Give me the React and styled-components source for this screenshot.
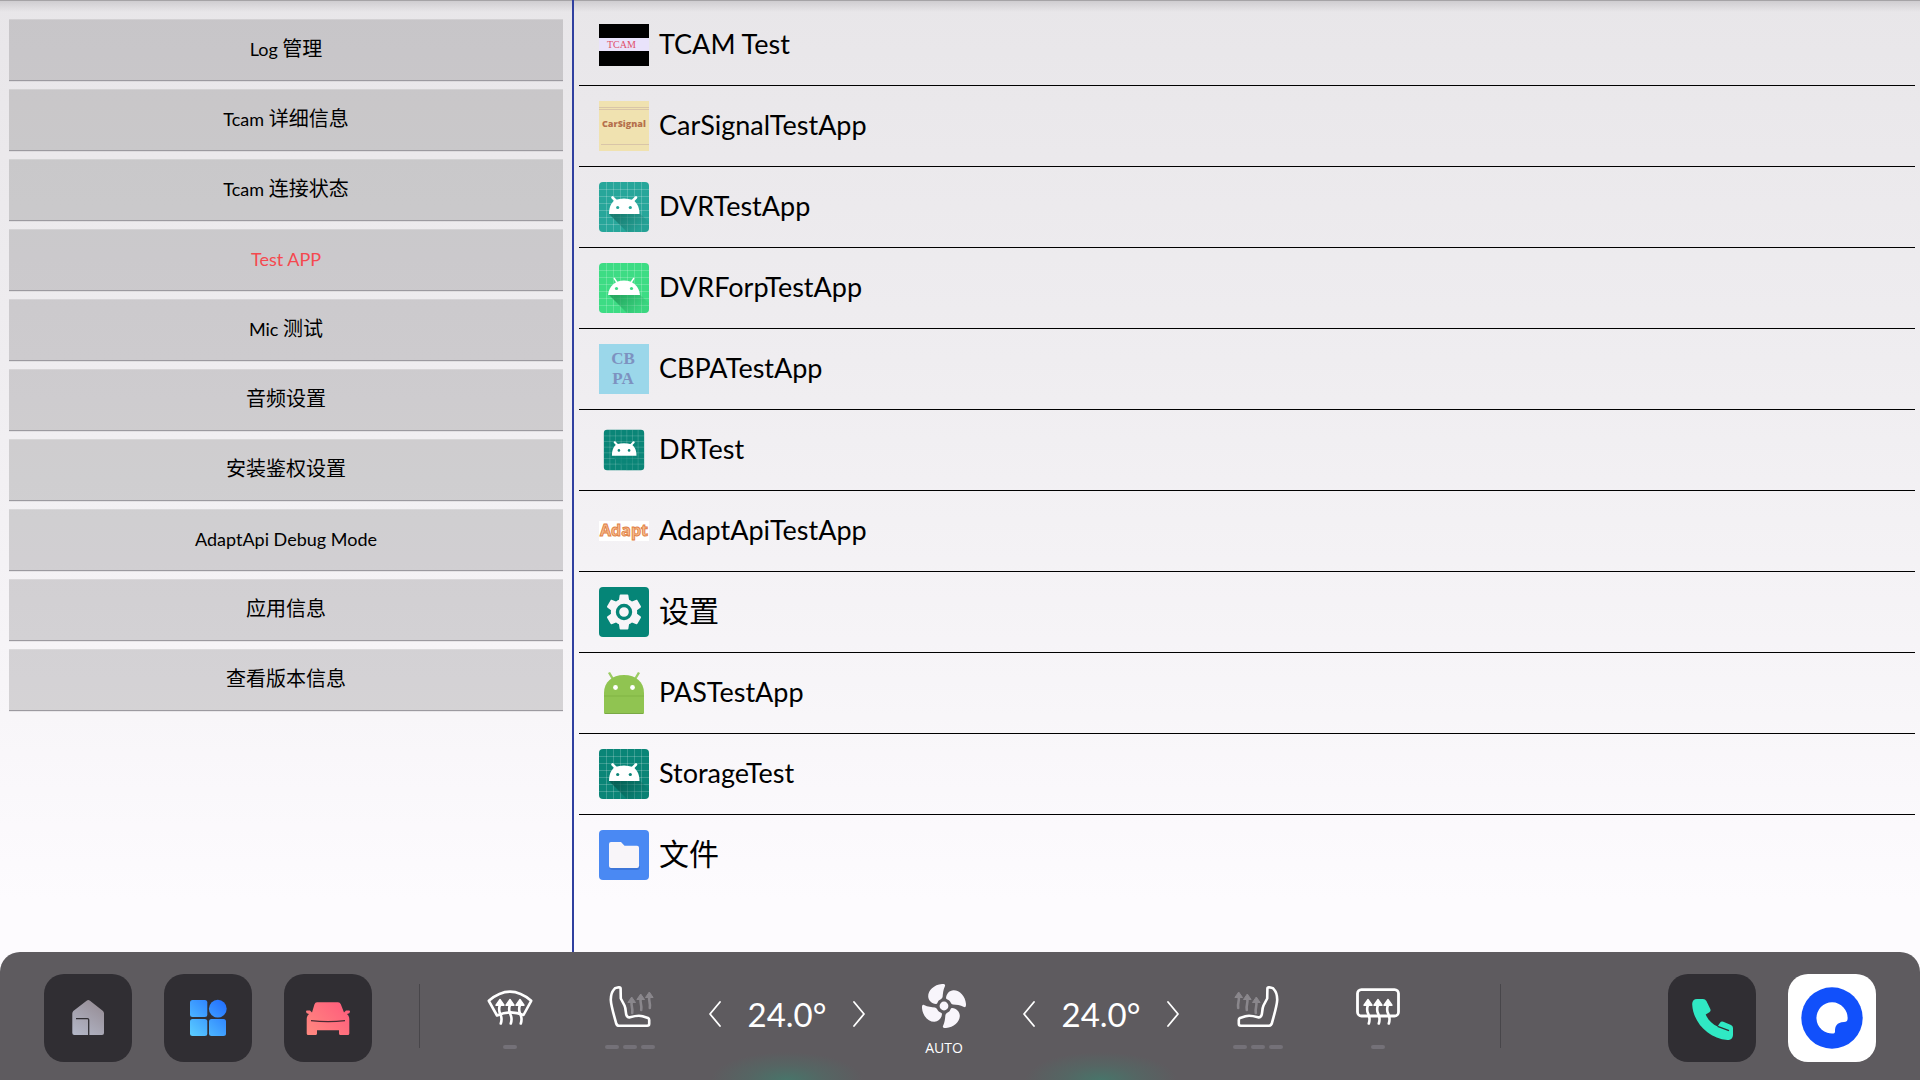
import React, { useState } from 'react';
import styled, { createGlobalStyle } from 'styled-components';

const GlobalStyle = createGlobalStyle`
  * {
    box-sizing: border-box;
  }

  body {
    margin: 0;
    font-family: Lato, "Noto Sans CJK SC", sans-serif;
    color: #000;
  }

  button {
    border: none;
    padding: 0;
    background: none;
    color: inherit;
    font: inherit;
    cursor: pointer;
  }

  ul {
    list-style: none;
    margin: 0;
    padding: 0;
  }

  svg {
    display: block;
    flex-shrink: 0;
  }
`;

const Page = styled.div`
  min-height: 100vh;
  display: flex;
  flex-direction: column;
  background:
    linear-gradient(#a5a3a6 0, #a5a3a6 1px, rgba(190, 188, 192, 0.6) 1px, rgba(220, 218, 222, 0) 12px),
    linear-gradient(#e8e6e9 0, #efedf0 360px, #f7f5f8 680px, #fdfbfe 900px);
`;

const Content = styled.main`
  flex: 1;
  display: flex;
`;

const Sidebar = styled.nav`
  flex: 0 0 574px;
  padding: 19px 9px;
  border-right: 2px solid #3040a0;

  ul {
    display: grid;
    gap: 8px;
  }
`;

const MenuButton = styled.button`
  width: 100%;
  height: 62px;
  padding-bottom: 4px;
  background-color: rgba(0, 0, 0, 0.14);
  box-shadow: inset 0 -1px #9c9aa0, inset 0 1px rgba(255, 255, 255, 0.2), 0 1px rgba(0, 0, 0, 0.06);
  font-size: 20px;
  line-height: 28px;
  color: ${props => (props.$active ? '#f5484f' : '#000')};

  span {
    font-size: 18px;
  }
`;

const AppList = styled.ul`
  flex: 1;
  && {
    padding: 5px 5px 0;
  }

  li + li {
    border-top: 1px solid #000;
  }
`;

const AppRow = styled.button`
  width: 100%;
  height: 80px;
  padding: 0 20px;
  display: flex;
  align-items: center;
  gap: 10px;
  text-align: left;
`;

const AppName = styled.span`
  padding-bottom: ${props => (props.$cjk ? 4 : 2)}px;
  font-size: ${props => (props.$cjk ? 30 : 27)}px;
  line-height: 40px;
`;

const Dock = styled.footer`
  height: 128px;
  padding: 0 44px;
  display: flex;
  align-items: center;
  border-radius: 20px 20px 0 0;
  background-color: #5e5b5f;
  color: #fff;
`;

const DockGroup = styled.div`
  display: flex;
  gap: 32px;
`;

const Tile = styled.button`
  width: 88px;
  height: 88px;
  margin-top: 4px;
  display: grid;
  place-items: center;
  border-radius: 20px;
  background-color: ${props => (props.$light ? '#fff' : '#302e33')};
`;

const Divider = styled.div`
  width: 1px;
  height: 64px;
  margin: 0 ${props => props.$after || 0}px 0 ${props => props.$before || 0}px;
  background-color: #48464a;
`;

const Climate = styled.div`
  flex: 1;
  align-self: stretch;
  padding-right: 32px;
  display: flex;
  justify-content: center;
  gap: 27px;
`;

const ClimateButton = styled.button`
  width: 88px;
  height: 128px;
  padding-top: 30px;
  display: flex;
  flex-direction: column;
  align-items: center;
`;

const Levels = styled.div`
  margin-top: 15px;
  display: flex;
  gap: 4px;

  i {
    width: 14px;
    height: 4px;
    border-radius: 2px;
    background-color: #747178;
  }
`;

const FanLabel = styled.span`
  margin-top: 8px;
  font-family: "Open Sans", sans-serif;
  font-size: 14px;
  line-height: 20px;
`;

const Temperature = styled.div`
  width: 172px;
  height: 128px;
  padding-bottom: 4px;
  display: flex;
  align-items: center;
  justify-content: space-between;
  background: radial-gradient(ellipse 76px 28px at 50% 100%, #48756a, rgba(72, 117, 106, 0.4) 50%, rgba(94, 91, 95, 0));

  output {
    font-size: 33px;
    line-height: 40px;
  }
`;

const Step = styled.button`
  width: 28px;
  height: 48px;
  display: grid;
  place-items: center;
`;

function AndroidIcon({ id, color, shade, thin, inset }) {
  const lines = [7, 14, 21, 28, 35, 42];
  return (
    <svg width="50" height="50" viewBox={inset ? '-6 -6 62 62' : '0 0 50 50'}>
      <defs>
        <linearGradient id={id} gradientUnits="userSpaceOnUse" x1="20" y1="32" x2="38" y2="50">
          <stop offset="0" stopColor={shade} stopOpacity="0.8" />
          <stop offset="1" stopColor={shade} stopOpacity="0.1" />
        </linearGradient>
      </defs>
      <rect width="50" height="50" rx="4" fill={color} />
      <g stroke="#fff" strokeOpacity="0.2" strokeWidth="1">
        {lines.map(n => (
          <path key={n} d={`M${n + 0.5} 0V50M0 ${n + 0.5}H50`} />
        ))}
      </g>
      <path d="M10 32L28 50H46Q50 50 50 46V40L40 31Z" fill={`url(#${id})`} />
      {thin ? (
        <g>
          <path d="M15 15L19 21M35 15L31 21" stroke="#fff" strokeWidth="1.4" />
          <path d="M9 32C10 23 16 17.500 25 17.500S40 23 41 32Z" fill="#fff" />
        </g>
      ) : (
        <g>
          <path d="M13.500 15.500L18 20M37 15.500L32.500 20" stroke="#fff" strokeWidth="2.6" strokeLinecap="round" />
          <path d="M10 32C10 24 13 20 16 18Q25 15 34 18C37 20 40.500 24 40.500 32Z" fill="#fff" />
        </g>
      )}
      <circle cx={thin ? 17.5 : 18.7} cy="25.500" r="1.600" fill={color} />
      <circle cx={thin ? 32.5 : 31.3} cy="25.500" r="1.600" fill={color} />
    </svg>
  );
}

function TcamIcon() {
  return (
    <svg width="50" height="50">
      <rect y="4" width="50" height="42" />
      <rect y="18" width="50" height="13" fill="#e9e3fb" />
      <text x="8" y="28" fontFamily="Liberation Serif, serif" fontSize="10" fill="#e0506a">TCAM</text>
    </svg>
  );
}

function CarSignalIcon() {
  return (
    <svg width="50" height="50">
      <rect width="50" height="50" fill="#f0e2b0" />
      <path d="M0 6.500H50M0 8.500H50M2 43.500H50" stroke="#d9c5a8" />
      <text x="3" y="26" fontFamily="Open Sans, sans-serif" fontWeight="800" fontSize="9" fill="#b5704c">CarSignal</text>
    </svg>
  );
}

function CbpaIcon() {
  return (
    <svg width="50" height="50" fontFamily="Liberation Serif, serif" fontWeight="700" fontSize="17">
      <rect width="50" height="50" fill="#9bd7ea" />
      <g fill="#7d92c0" textAnchor="middle">
        <text x="24" y="20">CB</text>
        <text x="24" y="40">PA</text>
      </g>
    </svg>
  );
}

function AdaptIcon() {
  return (
    <svg width="50" height="50">
      <rect y="15" width="50" height="20" fill="#fff" />
      <text x="25" y="30" textAnchor="middle" fontFamily="Open Sans, sans-serif" fontWeight="700" fontSize="16" fill="#f8bd90" stroke="#e07f45" strokeWidth="0.9">Adapt</text>
    </svg>
  );
}

function SettingsIcon() {
  return (
    <svg width="50" height="50">
      <rect width="50" height="50" rx="4" fill="#058577" />
      <g transform="translate(4 4) scale(1.75)" fill="#f7f5f8">
        <path d="M19.430 12.980c.04-.32.07-.64.07-.98s-.03-.66-.07-.98l2.110-1.650c.19-.15.24-.42.12-.64l-2-3.460c-.12-.22-.39-.3-.61-.22l-2.490 1c-.52-.4-1.080-.73-1.690-.98l-.38-2.650C14.460 2.180 14.250 2 14 2h-4c-.25 0-.46.18-.49.42l-.38 2.650c-.61.25-1.170.59-1.690.98l-2.490-1c-.23-.09-.49 0-.61.22l-2 3.460c-.13.22-.07.49.12.64l2.110 1.650c-.04.32-.07.65-.07.98s.03.66.07.98l-2.110 1.650c-.19.15-.24.42-.12.64l2 3.460c.12.22.39.3.61.22l2.490-1c.52.4 1.080.73 1.690.98l.38 2.650c.03.24.24.42.49.42h4c.25 0 .46-.18.49-.42l.38-2.650c.61-.25 1.170-.59 1.690-.98l2.490 1c.23.09.49 0 .61-.22l2-3.460c.12-.22.07-.49-.12-.64l-2.110-1.650z" />
      </g>
      <circle cx="25" cy="25" r="6.500" fill="none" stroke="#058577" strokeWidth="3.400" />
    </svg>
  );
}

function RobotIcon() {
  return (
    <svg width="50" height="50">
      <path d="M10 4.500L14.500 12M40 4.500L35.500 12" stroke="#9ccc65" strokeWidth="2.400" />
      <path d="M5 45V25C5 14 13 7 25 7S45 14 45 25V45Q45 46 44 46H6Q5 46 5 45Z" fill="#90c451" />
      <path d="M5 27H45V29H5Z" fill="#7fb343" opacity="0.5" />
      <path d="M6 45.500H44" stroke="#79a845" />
      <circle cx="16.500" cy="19.500" r="2.400" fill="#fff" />
      <circle cx="33.500" cy="19.500" r="2.400" fill="#fff" />
    </svg>
  );
}

function FilesIcon() {
  return (
    <svg width="50" height="50">
      <rect width="50" height="50" rx="4" fill="#4a89f3" />
      <path d="M10 36Q10 40 14 40H38Q41 40 41 36Z" fill="#3567c8" opacity="0.6" />
      <path d="M10 14Q10 12 12 12H22L25.500 15.700H38Q40 15.700 40 17.700V36Q40 38 38 38H12Q10 38 10 36Z" fill="#f8f5f9" />
    </svg>
  );
}

function HomeIcon() {
  return (
    <svg width="48" height="48">
      <defs>
        <linearGradient id="home" x1="0" y1="1" x2="0.6" y2="0">
          <stop offset="0" stopColor="#b4b8c9" />
          <stop offset="1" stopColor="#989099" />
        </linearGradient>
      </defs>
      <path d="M22.600 6.800Q24.300 5.300 26 6.800L39 17Q40 18 40 19.500V39Q40 41 38 41H10.300Q8.300 41 8.300 39V19.500Q8.300 18 9.300 17Z" fill="url(#home)" />
      <path d="M12 24.600H23.500Q24.700 24.600 24.700 25.800V41" fill="none" stroke="#302e33" strokeWidth="1.300" />
    </svg>
  );
}

function GridIcon() {
  return (
    <svg width="48" height="48">
      <defs>
        <linearGradient id="grid" gradientUnits="userSpaceOnUse" x1="8" y1="42" x2="40" y2="8">
          <stop offset="0" stopColor="#5accff" />
          <stop offset="1" stopColor="#2472ff" />
        </linearGradient>
      </defs>
      <g fill="url(#grid)">
        <rect x="6" y="6" width="17.300" height="17" rx="2.500" />
        <circle cx="33.800" cy="14.700" r="8.900" />
        <rect x="6" y="25" width="17.300" height="17" rx="2.500" />
        <rect x="25" y="25" width="17" height="17" rx="2.500" />
      </g>
    </svg>
  );
}

function CarIcon() {
  return (
    <svg width="48" height="48">
      <defs>
        <linearGradient id="car" x1="0" y1="1" x2="1" y2="0.300">
          <stop offset="0" stopColor="#ff8a80" />
          <stop offset="1" stopColor="#ff5f7c" />
        </linearGradient>
      </defs>
      <path d="M13 8.300H34Q36 8.300 36.800 10.300L40 18.500L42 16.500H45Q46 16.500 46 17.800Q46 19.500 43 20Q45.300 22 45.300 25V39.500Q45.300 41 43.800 41H36.500Q35 41 35 39.500V36.200H13V39.500Q13 41 11.500 41H4.200Q2.700 41 2.700 39.500V25Q2.700 22 5 20Q2 19.500 2 17.800Q2 16.500 3 16.500H6L8 18.500L10.500 10.300Q11.200 8.300 13 8.300Z" fill="url(#car)" />
      <path d="M7 26.700Q24 28.500 41 26.700" fill="none" stroke="#4a2a33" strokeWidth="1.300" />
    </svg>
  );
}

function PhoneIcon() {
  return (
    <svg width="48" height="48">
      <path d="M9 5H15Q17.300 5 18.400 7L22.300 15Q23.200 17 21.400 18.300L17.700 20.500C20 26 24.500 30.500 29.500 32.500L32 28.700Q33.300 27 35.300 27.800L43 31Q45 32 45 34V40.500C45 44 43 46.200 39.500 46C20 44.500 5 28 4.200 10.500C4 7 6 5 9 5Z" fill="#30e8c4" />
      <path d="M29.600 32.300L41 36.600" stroke="#302e33" strokeWidth="1.300" />
    </svg>
  );
}

function BrowserIcon() {
  return (
    <svg width="64" height="64">
      <circle cx="32" cy="32" r="30.700" fill="#1150fb" />
      <path d="M47.600 33A15.600 15.600 0 1 0 33.500 47.500Q35 47.300 35 45.500C35 40 36.500 36.500 44 36Q47.500 35.800 47.600 33Z" fill="#fff" />
    </svg>
  );
}

function HeatArrows({ offsets = [14, 24, 34] }) {
  return offsets.map(x => (
    <g key={x} transform={`translate(${x} 0)`}>
      <path d="M0 17.500L4 23.200H-4Z" fill="#fff" stroke="#fff" strokeWidth="1.400" strokeLinejoin="round" />
      <path d="M0 23C-2 28 -0.500 30 0.500 32.500C2 36 2 38 0.800 41.500" fill="none" stroke="#fff" strokeWidth="2.600" strokeLinecap="round" />
    </g>
  ));
}

function FrontDefrostIcon() {
  return (
    <svg width="48" height="48">
      <path d="M2.800 18.800Q24 0.500 45.200 18.800L37.500 33Q24 27.500 11 33.500Z" fill="none" stroke="#fff" strokeWidth="2.600" strokeLinejoin="round" />
      <HeatArrows />
    </svg>
  );
}

function RearDefrostIcon() {
  return (
    <svg width="48" height="48">
      <rect x="3.500" y="7.600" width="41" height="26.400" rx="4" fill="none" stroke="#fff" strokeWidth="2.800" />
      <HeatArrows />
    </svg>
  );
}

function SeatIcon({ flip }) {
  return (
    <svg width="48" height="48">
      <g transform={flip ? 'translate(48 0) scale(-1 1)' : undefined}>
        <path d="M10.500 5.800L13 5.200Q14.500 5 14.600 6.500L14.800 16.500L18.500 23.500C20.500 28 19 31 21 34.300Q22 35.700 24 35.200C30 33.500 33 33 36.500 34.200L42 36Q43.200 36.500 43.200 38V41.800Q43.200 43.800 41.200 43.800H13Q11 43.800 10.300 41.800C8 33 5 24 4.800 18C4.700 13 6.500 9 8.300 7Q9 6.100 10.500 5.800Z" fill="none" stroke="#fff" strokeWidth="2.600" strokeLinejoin="round" />
        {[[25.7, 15], [34.7, 12], [43.3, 10]].map(([x, y]) => (
          <g key={x} transform={`translate(${x} ${y})`}>
            <path d="M0 0L3.800 5.500H-3.800Z" fill="#8a878c" stroke="#8a878c" strokeLinejoin="round" />
            <path d="M0 5C-1 9 1.500 11 0.500 16" fill="none" stroke="#8a878c" strokeWidth="2.600" strokeLinecap="round" />
          </g>
        ))}
      </g>
    </svg>
  );
}

function FanIcon() {
  return (
    <svg width="48" height="48" fill="#f8f5fb">
      <circle cx="24" cy="24" r="4.400" />
      {[0, 90, 180, 270].map(angle => (
        <path
          key={angle}
          transform={`rotate(${angle} 24 24)`}
          d="M25 4C25.600 2.400 24.300 1.900 22 2C14 2.600 8 8.500 8.200 14.500C8.400 18.500 11.500 21.600 16 22C17.500 22 17.300 20.500 18.500 18.800C19.600 17.400 22.200 17.200 22.600 15C23 11.500 23 8 25 4Z"
        />
      ))}
    </svg>
  );
}

function Chevron({ right }) {
  return (
    <svg width="12" height="26">
      <path d={right ? 'M1 1L11 13L1 25' : 'M11 1L1 13L11 25'} fill="none" stroke="#fff" strokeWidth="1.800" strokeLinecap="round" strokeLinejoin="round" />
    </svg>
  );
}

const menu = [
  { latin: 'Log ', text: '管理' },
  { latin: 'Tcam ', text: '详细信息' },
  { latin: 'Tcam ', text: '连接状态' },
  { latin: 'Test APP' },
  { latin: 'Mic ', text: '测试' },
  { text: '音频设置' },
  { text: '安装鉴权设置' },
  { latin: 'AdaptApi Debug Mode' },
  { text: '应用信息' },
  { text: '查看版本信息' },
];

const apps = [
  { name: 'TCAM Test', icon: <TcamIcon /> },
  { name: 'CarSignalTestApp', icon: <CarSignalIcon /> },
  { name: 'DVRTestApp', icon: <AndroidIcon id="dvr" color="#27a69a" shade="#147468" /> },
  { name: 'DVRForpTestApp', icon: <AndroidIcon id="dvrforp" color="#3ddc84" shade="#1f9c58" thin /> },
  { name: 'CBPATestApp', icon: <CbpaIcon /> },
  { name: 'DRTest', icon: <AndroidIcon id="dr" color="#0a8577" shade="#0a8577" inset /> },
  { name: 'AdaptApiTestApp', icon: <AdaptIcon /> },
  { name: '设置', icon: <SettingsIcon />, cjk: true },
  { name: 'PASTestApp', icon: <RobotIcon /> },
  { name: 'StorageTest', icon: <AndroidIcon id="storage" color="#0a8577" shade="#04584e" /> },
  { name: '文件', icon: <FilesIcon />, cjk: true },
];

function TemperatureControl({ label }) {
  const [value, setValue] = useState(24);

  return (
    <Temperature>
      <Step aria-label={`${label} -`} onClick={() => setValue(value - 0.5)}><Chevron /></Step>
      <output>{value.toFixed(1)}°</output>
      <Step aria-label={`${label} +`} onClick={() => setValue(value + 0.5)}><Chevron right /></Step>
    </Temperature>
  );
}

function App() {
  const [active, setActive] = useState(3);

  return (
    <Page>
      <GlobalStyle />
      <Content>
        <Sidebar>
          <ul>
            {menu.map((item, i) => (
              <li key={i}>
                <MenuButton $active={i === active} onClick={() => setActive(i)}>
                  {item.latin && <span>{item.latin}</span>}
                  {item.text}
                </MenuButton>
              </li>
            ))}
          </ul>
        </Sidebar>
        <AppList>
          {apps.map(app => (
            <li key={app.name}>
              <AppRow>
                {app.icon}
                <AppName $cjk={app.cjk}>{app.name}</AppName>
              </AppRow>
            </li>
          ))}
        </AppList>
      </Content>
      <Dock>
        <DockGroup>
          <Tile aria-label="Home"><HomeIcon /></Tile>
          <Tile aria-label="Apps"><GridIcon /></Tile>
          <Tile aria-label="Car"><CarIcon /></Tile>
        </DockGroup>
        <Divider $before={47} />
        <Climate>
          <DockGroup>
            <ClimateButton aria-label="Front defrost">
              <FrontDefrostIcon />
              <Levels><i /></Levels>
            </ClimateButton>
            <ClimateButton aria-label="Left seat heating">
              <SeatIcon />
              <Levels><i /><i /><i /></Levels>
            </ClimateButton>
          </DockGroup>
          <TemperatureControl label="Left temperature" />
          <ClimateButton>
            <FanIcon />
            <FanLabel>AUTO</FanLabel>
          </ClimateButton>
          <TemperatureControl label="Right temperature" />
          <DockGroup>
            <ClimateButton aria-label="Right seat heating">
              <SeatIcon flip />
              <Levels><i /><i /><i /></Levels>
            </ClimateButton>
            <ClimateButton aria-label="Rear defrost">
              <RearDefrostIcon />
              <Levels><i /></Levels>
            </ClimateButton>
          </DockGroup>
        </Climate>
        <Divider $after={167} />
        <DockGroup>
          <Tile aria-label="Phone"><PhoneIcon /></Tile>
          <Tile aria-label="Browser" $light><BrowserIcon /></Tile>
        </DockGroup>
      </Dock>
    </Page>
  );
}

export default App;
